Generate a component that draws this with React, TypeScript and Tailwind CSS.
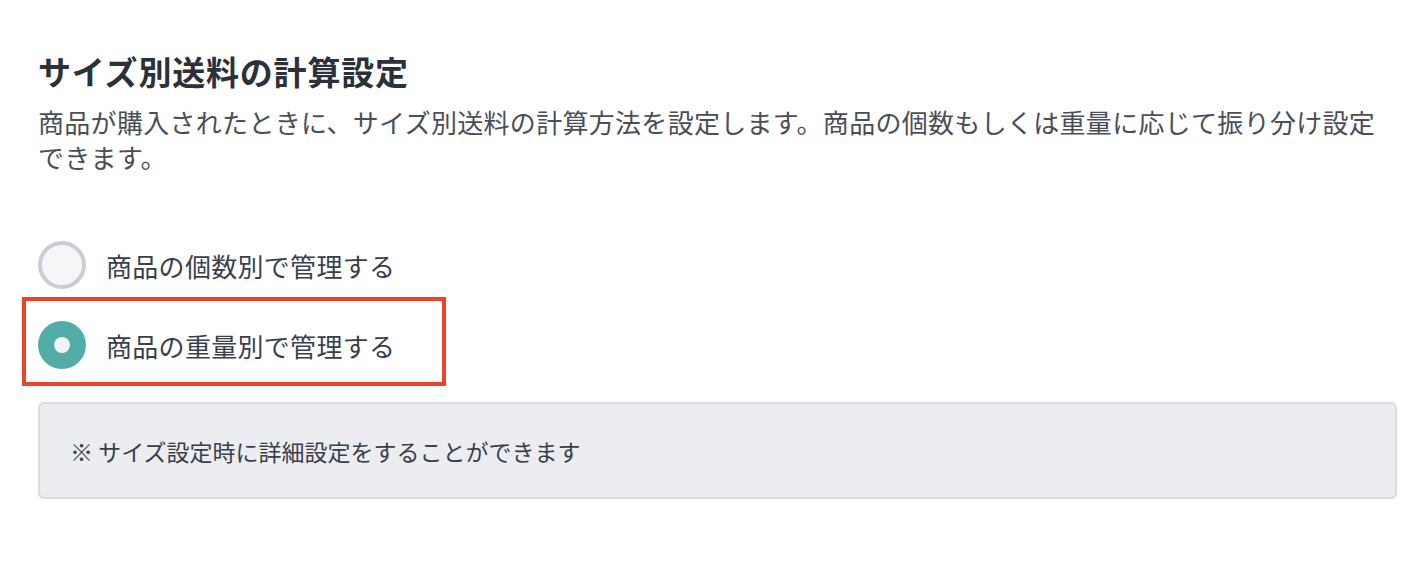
import React from "react";

const font = { fontFamily: '"Noto Sans CJK JP", "Noto Sans", sans-serif' };

function Radio({ checked }: { checked: boolean }) {
  if (checked) {
    return (
      <span className="flex h-[48px] w-[48px] shrink-0 items-center justify-center rounded-full bg-[#52ada8]">
        <span className="h-[16px] w-[16px] rounded-full bg-[#f3f4f6]" />
      </span>
    );
  }
  return (
    <span className="h-[48px] w-[48px] shrink-0 rounded-full border-[4px] border-[#c9cdd5] bg-[#f5f6f8]" />
  );
}

export default function App() {
  return (
    <div
      className="h-[570px] w-[1426px] bg-white pl-[38px] pr-[29px] pt-[49px]"
      style={font}
    >
      <h1 className="text-[33px] font-bold leading-[44px] tracking-[0.8px] text-[#2b303b]">
        サイズ別送料の計算設定
      </h1>
      <p className="mt-[11px] max-w-[1345px] text-[26px] leading-[35px] tracking-[0.3px] text-[#4a4e57]">
        商品が購入されたときに、サイズ別送料の計算方法を設定します。商品の個数もしくは重量に応じて振り分け設定できます。
      </p>

      <div className="mt-[67px] flex flex-col gap-[32px]">
        <label className="flex h-[48px] items-center gap-[20px]">
          <Radio checked={false} />
          <span className="text-[26px] leading-[35px] tracking-[0.3px] text-[#3a3f4b]">商品の個数別で管理する</span>
        </label>
        <div className="relative">
          <label className="flex h-[48px] items-center gap-[20px]">
            <Radio checked={true} />
            <span className="text-[26px] leading-[35px] tracking-[0.3px] text-[#3a3f4b]">商品の重量別で管理する</span>
          </label>
          <div className="pointer-events-none absolute left-[-16px] top-[-24px] h-[89px] w-[424px] border-[4px] border-[#e8452c]" />
        </div>
      </div>

      <div className="mt-[33px] flex h-[97px] items-center rounded-[6px] border-2 border-[#d9dbe0] bg-[#ecedf1] px-[30px]">
        <span className="text-[23px] leading-[30px] text-[#3a3f4b]">※ サイズ設定時に詳細設定をすることができます</span>
      </div>
    </div>
  );
}
